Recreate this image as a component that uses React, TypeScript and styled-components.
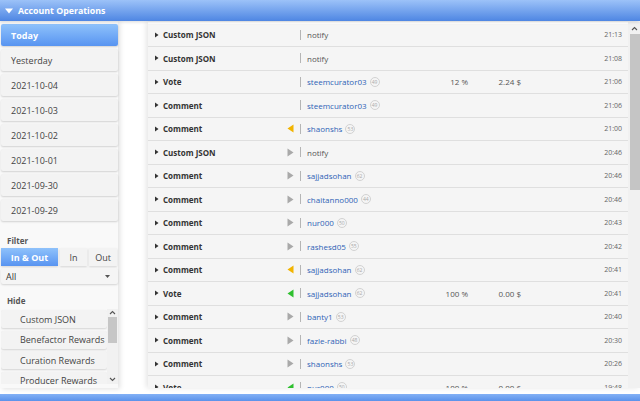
import React from "react";
import styled, { createGlobalStyle } from "styled-components";

type Dir = "none" | "in" | "out" | "vote";

interface Op {
  kind: string;
  dir: Dir;
  target: string;
  rep?: number;
  pct?: string;
  value?: string;
  time: string;
}

const DATES = ["Today", "Yesterday", "2021-10-04", "2021-10-03", "2021-10-02", "2021-10-01", "2021-09-30", "2021-09-29"];
const HIDE = ["Custom JSON", "Benefactor Rewards", "Curation Rewards", "Producer Rewards"];

const OPS: Op[] = [
  { kind: "Custom JSON", dir: "none", target: "notify", time: "21:13" },
  { kind: "Custom JSON", dir: "none", target: "notify", time: "21:08" },
  { kind: "Vote", dir: "none", target: "steemcurator03", rep: 49, pct: "12 %", value: "2.24 $", time: "21:06" },
  { kind: "Comment", dir: "none", target: "steemcurator03", rep: 49, time: "21:06" },
  { kind: "Comment", dir: "in", target: "shaonshs", rep: 53, time: "21:00" },
  { kind: "Custom JSON", dir: "out", target: "notify", time: "20:46" },
  { kind: "Comment", dir: "out", target: "sajjadsohan", rep: 62, time: "20:46" },
  { kind: "Comment", dir: "out", target: "chaitanno000", rep: 44, time: "20:46" },
  { kind: "Comment", dir: "out", target: "nur000", rep: 50, time: "20:43" },
  { kind: "Comment", dir: "out", target: "rashesd05", rep: 55, time: "20:42" },
  { kind: "Comment", dir: "in", target: "sajjadsohan", rep: 62, time: "20:41" },
  { kind: "Vote", dir: "vote", target: "sajjadsohan", rep: 62, pct: "100 %", value: "0.00 $", time: "20:41" },
  { kind: "Comment", dir: "out", target: "banty1", rep: 53, time: "20:40" },
  { kind: "Comment", dir: "out", target: "fazle-rabbi", rep: 48, time: "20:30" },
  { kind: "Comment", dir: "out", target: "shaonshs", rep: 53, time: "20:26" },
  { kind: "Vote", dir: "vote", target: "nur000", rep: 50, pct: "100 %", value: "0.00 $", time: "19:48" },
];

const Arrow = ({ dir }: { dir: Dir }) => {
  if (dir === "none") return null;
  if (dir === "out") {
    return (
      <svg width="7" height="9" viewBox="0 0 7 9">
        <polygon points="0.5,0.5 6.5,4.5 0.5,8.5" fill="#a9a9a9" />
      </svg>
    );
  }
  return (
    <svg width="7" height="9" viewBox="0 0 7 9">
      <polygon points="6.5,0.5 0.5,4.5 6.5,8.5" fill={dir === "in" ? "#f2b400" : "#2fc02f"} />
    </svg>
  );
};

const Chevron = ({ up }: { up?: boolean }) => (
  <svg width="7" height="5" viewBox="0 0 7 5">
    <polyline
      points={up ? "1,4 3.5,1.5 6,4" : "1,1 3.5,3.5 6,1"}
      fill="none"
      stroke="#555"
      strokeWidth="1.1"
    />
  </svg>
);

const App = () => {
  // Main return
  return (
    <Page>
      <GlobalStyle />
      <Header>
        <svg width="8" height="6" viewBox="0 0 8 6">
          <polygon points="0,0.5 8,0.5 4,5.5" fill="#fff" />
        </svg>
        Account Operations
      </Header>
      <Body>
        <Sidebar>
          {DATES.map((d, i) => (
            <DateButton key={"date-" + d} $active={i === 0}>
              {d}
            </DateButton>
          ))}
          <SectionLabel>Filter</SectionLabel>
          <Segmented>
            <SegButton $active $width="57px">In &amp; Out</SegButton>
            <SegButton $width="27px">In</SegButton>
            <SegButton $width="28px">Out</SegButton>
          </Segmented>
          <Select>
            All
            <svg width="5" height="3" viewBox="0 0 5 3">
              <polygon points="0,0 5,0 2.5,3" fill="#555" />
            </svg>
          </Select>
          <SectionLabel>Hide</SectionLabel>
          <HideBox>
            <HideList>
              {HIDE.map((h) => (
                <HideItem key={"hide-" + h}>{h}</HideItem>
              ))}
            </HideList>
            <MiniScroll>
              <Chevron up />
              <MiniThumb />
              <Chevron />
            </MiniScroll>
          </HideBox>
        </Sidebar>
        <Main>
          <Rows>
            {OPS.map((op, index) => (
              <Row key={"op-" + index}>
                <svg width="4" height="6" viewBox="0 0 4 6">
                  <polygon points="0,0.5 3.5,3 0,5.5" fill="#333" />
                </svg>
                <Kind>{op.kind}</Kind>
                <DirCell>
                  <Arrow dir={op.dir} />
                </DirCell>
                <Separator />
                <Target>
                  {op.rep ? <Link>{op.target}</Link> : <Plain>{op.target}</Plain>}
                  {op.rep && <Rep>{op.rep}</Rep>}
                </Target>
                <Num>{op.pct}</Num>
                <Num>{op.value}</Num>
                <Time>{op.time}</Time>
              </Row>
            ))}
          </Rows>
          <ScrollTrack>
            <Chevron up />
            <Thumb />
          </ScrollTrack>
        </Main>
      </Body>
      <Footer />
    </Page>
  );
};

export default App;

const GlobalStyle = createGlobalStyle`
  html, body {
    margin: 0;
    padding: 0;
    background: #ffffff;
    overflow: hidden;
  }
  * {
    box-sizing: border-box;
  }
`;

const Page = styled.div`
  width: 640px;
  height: 401px;
  display: flex;
  flex-direction: column;
  font-family: "Open Sans", "Noto Sans", sans-serif;
  color: #444;
  background: #fff;
`;

const Header = styled.div`
  height: 21px;
  flex-shrink: 0;
  display: flex;
  align-items: center;
  gap: 5px;
  padding-left: 5px;
  background: linear-gradient(#9cc2f8, #4e86e3);
  color: #fff;
  font-weight: 700;
  font-size: 8.8px;
  box-shadow: 0 1px 3px rgba(0, 0, 0, 0.15);
  position: relative;
  z-index: 2;
`;

const Body = styled.div`
  height: 373px;
  display: flex;
  align-items: flex-start;
`;

const Sidebar = styled.div`
  width: 118px;
  height: 367px;
  padding: 3px 0 0 1px;
  background: #f9f9f9;
  box-shadow: 2px 1px 5px rgba(0, 0, 0, 0.12);
  display: flex;
  flex-direction: column;
`;

const DateButton = styled.div<{ $active?: boolean }>`
  height: 22px;
  margin-bottom: 3px;
  padding-left: 10px;
  display: flex;
  align-items: center;
  border-radius: 2px;
  font-size: 9px;
  font-weight: ${({ $active }) => ($active ? 700 : 400)};
  color: ${({ $active }) => ($active ? "#fff" : "#444")};
  background: ${({ $active }) => ($active ? "linear-gradient(#8fc2fb, #5894f1)" : "#f3f3f3")};
  box-shadow: 0 1px 2px rgba(0, 0, 0, 0.16);
`;

const SectionLabel = styled.div`
  margin-top: 10px;
  padding-left: 6px;
  height: 13px;
  line-height: 13px;
  font-size: 8px;
  font-weight: 700;
  color: #555;
  &:first-of-type {
    margin-top: 12px;
  }
`;

const Segmented = styled.div`
  display: flex;
  gap: 2px;
  height: 18px;
  margin-top: 1px;
`;

const SegButton = styled.div<{ $active?: boolean; $width: string }>`
  width: ${({ $width }) => $width};
  display: flex;
  align-items: center;
  justify-content: center;
  font-size: 9px;
  font-weight: ${({ $active }) => ($active ? 700 : 400)};
  color: ${({ $active }) => ($active ? "#fff" : "#444")};
  background: ${({ $active }) => ($active ? "linear-gradient(#8fc2fb, #5894f1)" : "#f3f3f3")};
  box-shadow: 0 1px 2px rgba(0, 0, 0, 0.15);
`;

const Select = styled.div`
  height: 16px;
  margin-top: 2px;
  padding: 0 8px 0 5px;
  display: flex;
  align-items: center;
  justify-content: space-between;
  font-size: 9px;
  color: #333;
  background: #f5f5f5;
  border-radius: 2px;
  box-shadow: 0 1px 2px rgba(0, 0, 0, 0.15);
`;

const HideBox = styled.div`
  margin-top: 2px;
  height: 75px;
  display: flex;
  overflow: hidden;
`;

const HideList = styled.div`
  width: 106px;
  display: flex;
  flex-direction: column;
  gap: 2.5px;
  padding-top: 1px;
`;

const HideItem = styled.div`
  height: 18px;
  flex-shrink: 0;
  padding-left: 19px;
  display: flex;
  align-items: center;
  font-size: 9px;
  color: #444;
  white-space: nowrap;
  background: #f3f3f3;
  border-radius: 2px;
  box-shadow: 0 1px 2px rgba(0, 0, 0, 0.15);
`;

const MiniScroll = styled.div`
  width: 11px;
  display: flex;
  flex-direction: column;
  align-items: center;
  padding-top: 1px;
  background: #f1f1f1;
  svg {
    flex-shrink: 0;
  }
  svg:last-child {
    margin-top: auto;
    margin-bottom: 2px;
  }
`;

const MiniThumb = styled.div`
  width: 9px;
  height: 26px;
  margin-top: 2px;
  background: #c6c6c6;
`;

const Main = styled.div`
  margin: 1px 0 0 30px;
  width: 492px;
  height: 366px;
  display: flex;
  overflow: hidden;
  background: #fff;
  box-shadow: -2px 0 5px rgba(0, 0, 0, 0.1);
`;

const Rows = styled.div`
  width: 480px;
  padding-top: 1.5px;
  display: flex;
  flex-direction: column;
`;

const Row = styled.div`
  height: 23.5px;
  flex-shrink: 0;
  display: grid;
  grid-template-columns: 8px 122px 12px 10px 131px 30px 53px 1fr;
  align-items: center;
  padding: 0 6px 0 7px;
  background: #f5f5f5;
  border-bottom: 1.6px solid #dfdfdf;
  font-size: 8px;
`;

const Kind = styled.span`
  font-weight: 700;
  color: #333;
  white-space: nowrap;
`;

const DirCell = styled.div`
  display: flex;
  align-items: center;
  justify-content: flex-end;
  padding-right: 3px;
`;

const Separator = styled.div`
  width: 1px;
  height: 10px;
  margin-left: 3px;
  background: #b5b5b5;
`;

const Target = styled.div`
  display: flex;
  align-items: center;
  gap: 3px;
  white-space: nowrap;
`;

const Link = styled.span`
  color: #2f63b5;
`;

const Plain = styled.span`
  color: #555;
`;

const Rep = styled.span`
  width: 10px;
  height: 10px;
  border-radius: 50%;
  border: 1px solid #d2d2d2;
  display: flex;
  align-items: center;
  justify-content: center;
  font-size: 5px;
  color: #aaa;
`;

const Num = styled.span`
  text-align: right;
  color: #555;
  white-space: nowrap;
`;

const Time = styled.span`
  text-align: right;
  font-size: 7px;
  color: #666;
`;

const ScrollTrack = styled.div`
  width: 12px;
  display: flex;
  flex-direction: column;
  align-items: center;
  padding-top: 4px;
  background: #f1f1f1;
  svg {
    flex-shrink: 0;
  }
`;

const Thumb = styled.div`
  width: 10px;
  height: 156px;
  margin-top: 3px;
  margin-left: 2px;
  background: #c5c5c5;
`;

const Footer = styled.div`
  margin-top: auto;
  height: 7px;
  background: linear-gradient(#83b1f6, #5b92ea);
`;
